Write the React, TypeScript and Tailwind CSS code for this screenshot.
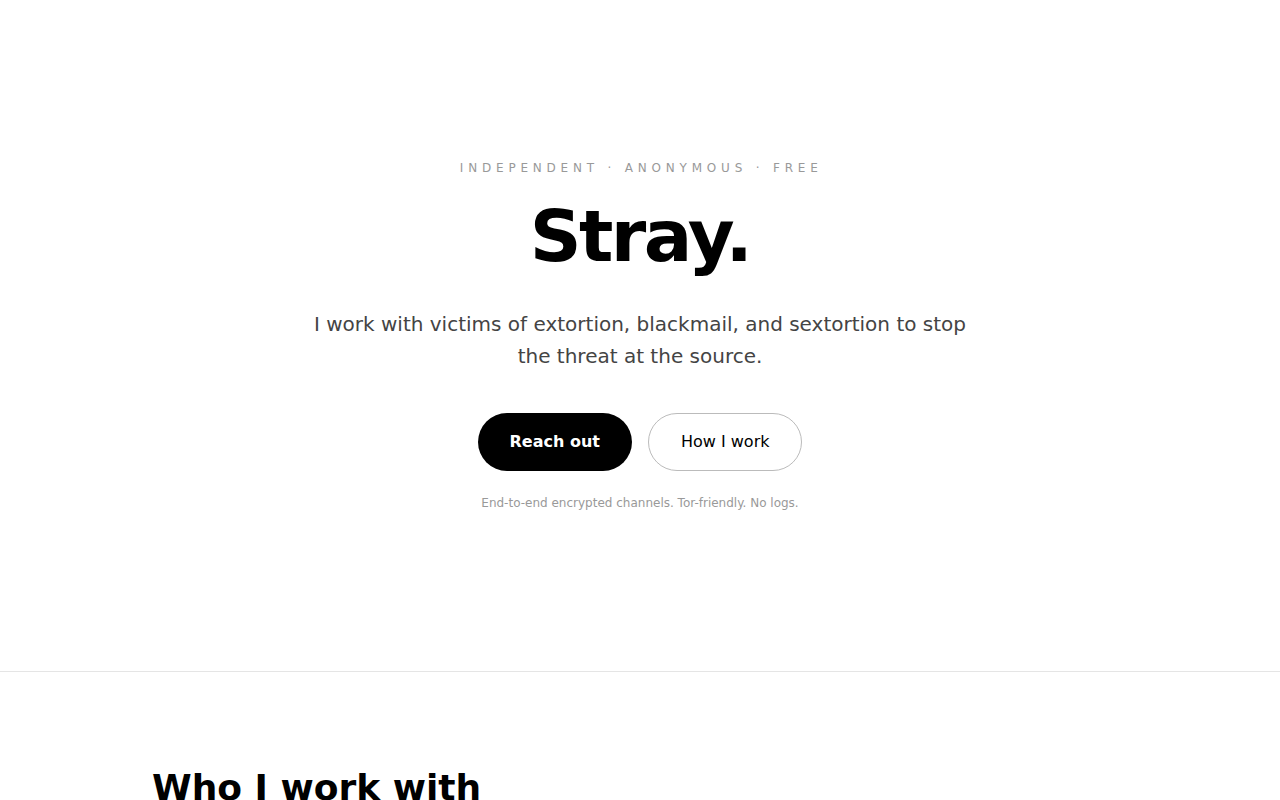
import React from 'react';

const font = { fontFamily: '"DejaVu Sans", Verdana, sans-serif' };

const audiences = [
  {
    title: 'Extortion',
    body: 'Someone is demanding money or favours in exchange for keeping information private.'
  },
  {
    title: 'Blackmail',
    body: 'Threats to expose personal details, messages or images unless you comply.'
  },
  {
    title: 'Sextortion',
    body: 'Intimate images used as leverage. You are not alone, and it can be stopped.'
  }
];

const Hero: React.FC = () => (
  <section className="h-[672px] flex items-center justify-center border-b border-[#e5e5e5] px-6">
    <div className="flex flex-col items-center text-center">
      <p className="text-xs leading-4 tracking-[0.4em] uppercase text-[#999] pl-[0.2em]">
        Independent · Anonymous · Free
      </p>
      <h1 className="mt-6 text-[72px] leading-[72px] font-bold tracking-[-0.035em] text-black">
        Stray.
      </h1>
      <p className="mt-9 max-w-2xl text-xl leading-8 text-[#444]">
        I work with victims of extortion, blackmail, and sextortion to stop the threat at the source.
      </p>
      <div className="mt-[41px] flex items-center gap-4">
        <a
          href="#contact"
          className="rounded-full bg-black px-8 py-[17px] text-base leading-6 font-bold text-white"
        >
          Reach out
        </a>
        <a
          href="#how"
          className="rounded-full border border-[#bbb] bg-white px-8 py-4 text-base leading-6 text-black"
        >
          How I work
        </a>
      </div>
      <p className="mt-6 text-xs leading-4 text-[#999]">
        End-to-end encrypted channels. Tor-friendly. No logs.
      </p>
    </div>
  </section>
);

const WhoIWorkWith: React.FC = () => (
  <section className="py-24">
    <div className="max-w-5xl mx-auto px-6">
      <h2 className="text-4xl leading-10 font-bold text-black">Who I work with</h2>
      <div className="mt-10 grid grid-cols-3 gap-6">
        {audiences.map((a) => (
          <div key={a.title} className="rounded-2xl border border-[#e5e5e5] p-6">
            <h3 className="text-lg font-bold text-black">{a.title}</h3>
            <p className="mt-2 text-sm leading-6 text-[#555]">{a.body}</p>
          </div>
        ))}
      </div>
    </div>
  </section>
);

export default function App() {
  return (
    <div className="min-h-screen bg-white text-black" style={font}>
      <Hero />
      <WhoIWorkWith />
    </div>
  );
}
